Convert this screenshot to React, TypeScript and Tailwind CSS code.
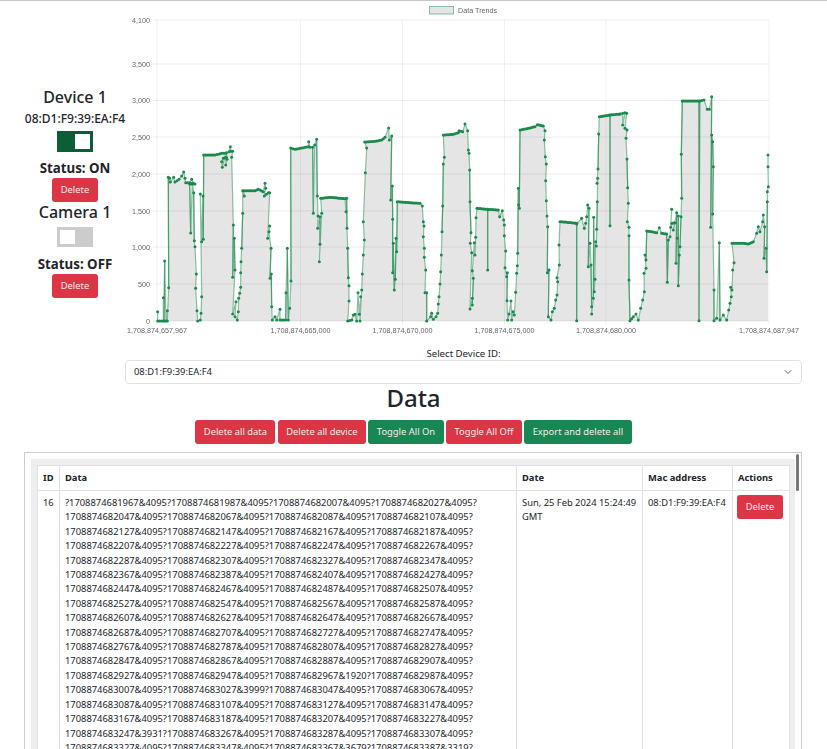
type Pt = [number, number];

// traced from the picture in crops, each crop has its own origin at 3x
const crop = (ox: number, oy: number, pts: Pt[]): Pt[] => pts.map(([x, y]) => [ox + x / 3, oy + y / 3]);

const series: Pt[] = [
  ...crop(155, 120, [
    [8, 575], [8, 603], [25, 603], [25, 533], [27, 603], [29, 423], [33, 603], [37, 572], [37, 603], [41, 503], [40, 172], [44, 175], [46, 186], [56, 172], [60, 186], [72, 178], [80, 168], [86, 156], [90, 175], [92, 188], [104, 188], [110, 178], [115, 190], [120, 192], [104, 192], [107, 339], [112, 190], [116, 218], [118, 362], [120, 380], [124, 462], [122, 505], [126, 572], [128, 603], [136, 600], [138, 580], [140, 530], [136, 222], [140, 365], [144, 228], [145, 358], [146, 105], [180, 105], [200, 100], [212, 100], [202, 142], [200, 125], [205, 115], [214, 112], [212, 135], [216, 118], [214, 98], [222, 95], [226, 80], [228, 94], [233, 94], [230, 112], [235, 315], [233, 472], [238, 355], [240, 450], [233, 582], [243, 545], [240, 590], [247, 600], [250, 575], [251, 535], [254, 520], [257, 502], [257, 458], [258, 425], [260, 385], [263, 280], [263, 212], [268, 228], [266, 212], [300, 212], [310, 208], [325, 215], [330, 190], [332, 205], [328, 228], [340, 218], [344, 218], [338, 355], [344, 318], [342, 335], [348, 385], [345, 475], [349, 462], [350, 560], [352, 600], [360, 590], [365, 600], [375, 568], [375, 600], [392, 600], [393, 518], [397, 385], [400, 600], [404, 565], [408, 483], [407, 84], [420, 88], [440, 84], [460, 80], [461, 65],
  ]),
  ...crop(310, 120, [
    [0, 82], [8, 82], [10, 280], [14, 75], [20, 58], [22, 228], [24, 288], [23, 325], [30, 290], [30, 373], [28, 425], [35, 280], [32, 235], [60, 232], [105, 236], [108, 275], [110, 235], [111, 325], [113, 385], [115, 473], [117, 497], [117, 543], [113, 603], [125, 600], [130, 585], [135, 583], [140, 603], [144, 518], [148, 583], [152, 530], [150, 603], [155, 510], [157, 462], [160, 405], [163, 360], [160, 305], [166, 158], [170, 84], [164, 66], [195, 64], [215, 60], [225, 52], [236, 24], [238, 60], [245, 48], [242, 240], [247, 198], [248, 298], [248, 458], [250, 370], [253, 510], [256, 478], [258, 355], [260, 395], [262, 245], [300, 248], [330, 250], [337, 258], [340, 305], [342, 318], [340, 350], [343, 385], [343, 412], [347, 450], [345, 518], [350, 518], [350, 603], [362, 590], [365, 580], [370, 598], [378, 590], [383, 580], [385, 552], [387, 530], [390, 492], [392, 455], [394, 405], [396, 335], [398, 258], [400, 132], [403, 112], [400, 45], [430, 43], [445, 38], [447, 32], [458, 35],
  ]),
  ...crop(465, 110, [
    [0, 42], [8, 62], [10, 120], [12, 130], [14, 180], [15, 275], [18, 368], [16, 400], [20, 428], [15, 597], [22, 565], [22, 585], [25, 505], [22, 482], [28, 398], [30, 435], [32, 382], [33, 323], [36, 295], [68, 298], [68, 480], [68, 298], [100, 300], [104, 320], [112, 302], [116, 330], [118, 345], [118, 377], [122, 423], [120, 473], [125, 500], [127, 488], [126, 572], [128, 630], [132, 612], [138, 573], [140, 630], [144, 605], [148, 615], [152, 547], [155, 490], [157, 467], [158, 430], [160, 235], [161, 285], [163, 295], [165, 60], [190, 55], [210, 50], [217, 44], [235, 48], [240, 62], [238, 90], [241, 140], [244, 162], [242, 212], [244, 272], [246, 318], [248, 350], [247, 488], [252, 480], [250, 620], [258, 630], [262, 605], [268, 595], [272, 570], [276, 555], [278, 515], [276, 503], [283, 465], [282, 405], [285, 335], [320, 338], [335, 340], [335, 632], [335, 342], [350, 325], [358, 355], [362, 340], [365, 320], [368, 285], [372, 295], [370, 470], [375, 400], [378, 465], [380, 590], [380, 612], [385, 565], [386, 322], [390, 508], [388, 545], [392, 395], [394, 408], [395, 358], [397, 275], [398, 205], [396, 220], [399, 177], [401, 72], [403, 20], [435, 15], [435, 347], [435, 15], [465, 12],
  ]),
  ...crop(620, 90, [
    [0, 72], [8, 70], [8, 105], [15, 68], [20, 70], [15, 115], [21, 120], [18, 145], [21, 207], [23, 293], [25, 340], [22, 395], [27, 412], [27, 437], [27, 570], [30, 692], [40, 680], [48, 672], [55, 690], [62, 655], [68, 630], [73, 605], [72, 550], [78, 535], [75, 495], [78, 510], [80, 423], [110, 428], [118, 413], [125, 430], [140, 432], [142, 577], [145, 450], [150, 440], [155, 358], [152, 412], [156, 400], [165, 398], [160, 420], [170, 368], [168, 520], [172, 445], [175, 378], [175, 587], [178, 495], [180, 470], [183, 380], [185, 325], [184, 193], [187, 33], [237, 33], [237, 692], [239, 33], [252, 30], [262, 58], [268, 58], [275, 20], [272, 412], [275, 135], [278, 155], [280, 230], [278, 372], [282, 600], [282, 692], [290, 685], [298, 458], [300, 690], [310, 675], [320, 690], [326, 660], [330, 640], [334, 620], [332, 592], [336, 600], [338, 540], [342, 518], [336, 460], [370, 460], [385, 462], [400, 455], [410, 430], [415, 410], [420, 425], [428, 395], [430, 375], [434, 410], [432, 505], [438, 475], [440, 545], [442, 335], [442, 305], [445, 290], [444, 230], [444, 195],
  ]),
];

// plateaus are a solid run of samples, so fill them with dots
const dots: Pt[] = series.flatMap((p, i) => {
  const next = series[i + 1];
  if (!next) return [p];
  const dx = next[0] - p[0];
  const dy = next[1] - p[1];
  if (Math.abs(dy) > 4 || Math.abs(dx) < 2) return [p];
  const n = Math.floor(Math.abs(dx) / 1.5);
  return Array.from({ length: n }, (_, k): Pt => [p[0] + (dx * k) / n, p[1] + (dy * k) / n]);
});

const linePath = series.map(([x, y], i) => `${i ? 'L' : 'M'}${x.toFixed(1)} ${y.toFixed(1)}`).join('');
const fillPath = `${linePath}L768 321L157.7 321Z`;

// near vertical runs read darker, many samples sit on top of each other there
const steepPath = series
  .map(([x, y], i) => {
    const next = series[i + 1];
    if (!next || Math.abs(next[0] - x) > 1 || Math.abs(next[1] - y) < 25) return '';
    return `M${x.toFixed(1)} ${y.toFixed(1)}L${next[0].toFixed(1)} ${next[1].toFixed(1)}`;
  })
  .join('');

const yTicks: [string, number][] = [
  ['4,100', 20], ['3,500', 64], ['3,000', 100.5], ['2,500', 137], ['2,000', 174], ['1,500', 211], ['1,000', 247], ['500', 284], ['0', 321],
];
const xTicks: [string, number][] = [
  ['1,708,874,657,967', 157], ['1,708,874,665,000', 300.5], ['1,708,874,670,000', 402.5], ['1,708,874,675,000', 504.5], ['1,708,874,680,000', 606], ['1,708,874,687,947', 769],
];

function Chart() {
  return (
    <svg viewBox="125 1 677 345" className="w-[677px] h-[345px] shrink-0 blur-[0.3px]" style={{ fontFamily: '"Liberation Sans", sans-serif' }}>
      {yTicks.map(([label, y]) => (
        <g key={label}>
          <line x1={153} x2={769} y1={y} y2={y} stroke="#000" strokeOpacity={0.07} />
          <text x={150} y={y + 2.5} textAnchor="end" fontSize={7.2} fill="#666">{label}</text>
        </g>
      ))}
      {xTicks.map(([label, x]) => (
        <g key={label}>
          <line x1={x} x2={x} y1={20} y2={325} stroke="#000" strokeOpacity={0.06} />
          <text x={x} y={333} textAnchor="middle" fontSize={7.2} fill="#666">{label}</text>
        </g>
      ))}
      <rect x={429.5} y={6.5} width={24} height={7.5} fill="#e5e5e5" stroke="#1c8a4e" strokeOpacity={0.5} />
      <text x={458} y={12.5} fontSize={7.2} fill="#666">Data Trends</text>
      <path d={fillPath} fill="#000" fillOpacity={0.1} />
      <path d={linePath} fill="none" stroke="#1c8a4e" strokeOpacity={0.5} strokeWidth={1.2} />
      <path d={steepPath} fill="none" stroke="#1c8a4e" strokeOpacity={0.6} strokeWidth={1.2} />
      {dots.map(([x, y], i) => (
        <circle key={i} cx={x} cy={y} r={1.5} fill="#1c8a4e" />
      ))}
    </svg>
  );
}

function Btn({ color, children, className = 'px-[8.4px]' }: { color: 'red' | 'green'; children: string; className?: string }) {
  return (
    <button
      className={`h-6 rounded-[3px] text-[9.4px] text-[#f6e9ea] whitespace-nowrap ${className} ${
        color === 'red' ? 'bg-[#dc3545]' : 'bg-[#198754]'
      }`}
    >
      {children}
    </button>
  );
}

function Toggle({ on }: { on: boolean }) {
  return (
    <div className={`w-9 flex p-[3px] ${on ? 'h-[21px] bg-[#0b5e35] justify-end' : 'h-5 bg-[#cccccc] justify-start'}`}>
      <div className="w-[15px] bg-white" />
    </div>
  );
}

const rows = [
  '?1708874681967&4095?1708874681987&4095?1708874682007&4095?1708874682027&4095?',
  '1708874682047&4095?1708874682067&4095?1708874682087&4095?1708874682107&4095?',
  '1708874682127&4095?1708874682147&4095?1708874682167&4095?1708874682187&4095?',
  '1708874682207&4095?1708874682227&4095?1708874682247&4095?1708874682267&4095?',
  '1708874682287&4095?1708874682307&4095?1708874682327&4095?1708874682347&4095?',
  '1708874682367&4095?1708874682387&4095?1708874682407&4095?1708874682427&4095?',
  '1708874682447&4095?1708874682467&4095?1708874682487&4095?1708874682507&4095?',
  '1708874682527&4095?1708874682547&4095?1708874682567&4095?1708874682587&4095?',
  '1708874682607&4095?1708874682627&4095?1708874682647&4095?1708874682667&4095?',
  '1708874682687&4095?1708874682707&4095?1708874682727&4095?1708874682747&4095?',
  '1708874682767&4095?1708874682787&4095?1708874682807&4095?1708874682827&4095?',
  '1708874682847&4095?1708874682867&4095?1708874682887&4095?1708874682907&4095?',
  '1708874682927&4095?1708874682947&4095?1708874682967&1920?1708874682987&4095?',
  '1708874683007&4095?1708874683027&3999?1708874683047&4095?1708874683067&4095?',
  '1708874683087&4095?1708874683107&4095?1708874683127&4095?1708874683147&4095?',
  '1708874683167&4095?1708874683187&4095?1708874683207&4095?1708874683227&4095?',
  '1708874683247&3931?1708874683267&4095?1708874683287&4095?1708874683307&4095?',
  '1708874683327&4095?1708874683347&4095?1708874683367&3679?1708874683387&3319?',
];

export default function App() {
  return (
    <div
      className="h-screen overflow-hidden border-t border-[#c8c8c8] bg-white text-[#212529]"
      style={{ fontFamily: '"Noto Sans", sans-serif' }}
    >
      <div className="flex">
        <div className="w-[125px] shrink-0 pl-[25px] pt-[84px] flex flex-col items-center">
          <div className="text-[16px] leading-[24px] font-medium">Device 1</div>
          <div className="mt-[2px] text-[12px] leading-[16px] font-medium whitespace-nowrap">08:D1:F9:39:EA:F4</div>
          <div className="mt-[4px]"><Toggle on /></div>
          <div className="mt-[7px] text-[13.3px] leading-[18px] font-bold whitespace-nowrap">Status: ON</div>
          <div className="mt-[-2px]"><Btn color="red" className="w-[46px]">Delete</Btn></div>
          <div className="mt-[-2px] text-[16px] leading-[24px] font-medium">Camera 1</div>
          <div className="mt-[3px]"><Toggle on={false} /></div>
          <div className="mt-[8px] text-[13.3px] leading-[18px] font-bold whitespace-nowrap">Status: OFF</div>
          <div className="mt-[-2px]"><Btn color="red" className="w-[46px]">Delete</Btn></div>
        </div>
        <Chart />
      </div>

      <div className="ml-[125px] w-[677px] pt-[1px]">
        <div className="text-center text-[9.6px] leading-[14px]">Select Device ID:</div>
        <div className="mt-[-1px] h-6 border border-[#dee2e6] rounded-[4px] flex items-center justify-between pl-2 pr-[9px] text-[9.4px]">
          <span>08:D1:F9:39:EA:F4</span>
          <svg viewBox="0 0 16 16" className="w-[8px] h-[8px]" fill="none" stroke="#343a40" strokeWidth={1.6} strokeLinecap="round" strokeLinejoin="round">
            <path d="m2 5 6 6 6-6" />
          </svg>
        </div>
      </div>

      <h1 className="mt-[-1px] text-center text-[24px] leading-[29px] font-medium">Data</h1>
      <div className="mt-[8px] flex justify-center gap-[2.5px]">
        <Btn color="red">Delete all data</Btn>
        <Btn color="red">Delete all device</Btn>
        <Btn color="green">Toggle All On</Btn>
        <Btn color="red">Toggle All Off</Btn>
        <Btn color="green">Export and delete all</Btn>
      </div>

      <div className="relative mt-2 ml-6 w-[778px] border border-[#cccccc] p-[6px] h-[400px] overflow-hidden">
        <div className="absolute right-[2px] top-[1px] w-[3px] h-[37px] rounded-full bg-[#777777]" />
        <div className="w-[764px] bg-[#eeeeee] p-[6px]">
          <table className="w-[752px] table-fixed border-collapse bg-white text-[9.37px] leading-[14.4px]">
            <colgroup>
              <col className="w-[22px]" />
              <col className="w-[457px]" />
              <col className="w-[126px]" />
              <col className="w-[90px]" />
              <col className="w-[57px]" />
            </colgroup>
            <thead>
              <tr className="h-[25px] text-left font-bold">
                <th className="border border-[#dee2e6] px-[5px]">ID</th>
                <th className="border border-[#dee2e6] px-[5px]">Data</th>
                <th className="border border-[#dee2e6] px-[5px]">Date</th>
                <th className="border border-[#dee2e6] px-[5px]">Mac address</th>
                <th className="border border-[#dee2e6] px-[5px]">Actions</th>
              </tr>
            </thead>
            <tbody>
              <tr className="align-top">
                <td className="border border-[#dee2e6] px-[5px] py-[5px]">16</td>
                <td className="border border-[#dee2e6] px-[5px] py-[5px] whitespace-nowrap">
                  {rows.map((r) => (
                    <div key={r}>{r}</div>
                  ))}
                </td>
                <td className="border border-[#dee2e6] px-[5px] py-[5px] whitespace-nowrap">Sun, 25 Feb 2024 15:24:49<br />GMT</td>
                <td className="border border-[#dee2e6] px-[5px] py-[5px] whitespace-nowrap">08:D1:F9:39:EA:F4</td>
                <td className="border border-[#dee2e6] pl-[4px] py-[4px]"><Btn color="red" className="w-[46px]">Delete</Btn></td>
              </tr>
            </tbody>
          </table>
        </div>
      </div>
    </div>
  );
}
